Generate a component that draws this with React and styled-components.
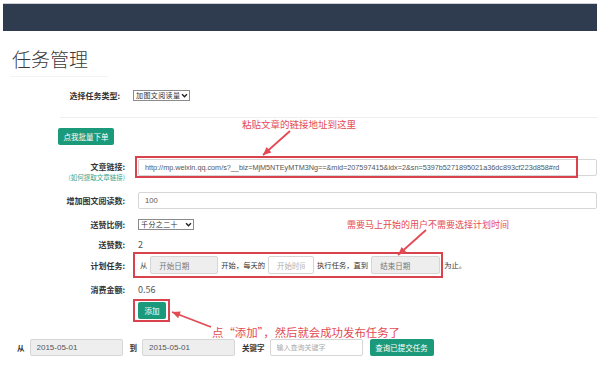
import React from 'react'
import styled, { createGlobalStyle } from 'styled-components'

const GREEN = '#1b9a7b'
const RED = '#e34a53'

const GlobalStyle = createGlobalStyle`
  html, body {
    margin: 0;
    background: #fff;
    font-family: "Noto Sans CJK SC", "Noto Sans", sans-serif;
    color: #333;
  }
`

// 标注箭头：从 tail 指向 tip
const arrowHead = (tail, tip, len = 8, half = 3.6) => {
  const dx = tip[0] - tail[0]
  const dy = tip[1] - tail[1]
  const l = Math.hypot(dx, dy)
  const ux = dx / l
  const uy = dy / l
  const bx = tip[0] - ux * len
  const by = tip[1] - uy * len
  return `${tip[0]},${tip[1]} ${bx - uy * half},${by + ux * half} ${bx + uy * half},${by - ux * half}`
}

const ARROWS = [
  { tail: [290, 131], tip: [263, 155] },
  { tail: [426, 230], tip: [398, 255] },
  { tail: [211, 327], tip: [172, 312] },
]

const App = () => {
  return (
    <Page>
      <GlobalStyle />
      <TopBar />
      <Title>任务管理</Title>
      <TitleRule />

      <Row $label={117} $mt={11} $h={14}>
        <Label>选择任务类型:</Label>
        <SelectBox $w={57}>
          加图文阅读量
          <Chevron />
        </SelectBox>
      </Row>

      <Divider />
      <BatchButton>点我批量下单</BatchButton>

      <LinkRow>
        <StackLabel>
          文章链接:
          <SubLabel>(如何提取文章链接)</SubLabel>
        </StackLabel>
        <InputWrap>
          <LinkField readOnly value="http://mp.weixin.qq.com/s?__biz=MjM5NTEyMTM3Ng==&mid=207597415&idx=2&sn=5397b5271895021a36dc893cf223d858#rd" />
          <LinkFrame />
        </InputWrap>
      </LinkRow>

      <Row $mt={10} $h={17}>
        <Label>增加图文阅读数:</Label>
        <Field readOnly value="100" />
      </Row>

      <Row $mt={9} $h={12}>
        <Label>送赞比例:</Label>
        <SelectBox $w={56}>
          千分之二十
          <Chevron />
        </SelectBox>
      </Row>

      <Row $mt={8} $h={12}>
        <Label>送赞数:</Label>
        <Value>2</Value>
      </Row>

      <Row $mt={2} $h={26}>
        <Label>计划任务:</Label>
        <PlanLine>
          <PlanFrame>
            <PlanText>从</PlanText>
            <SmallField $grey $w={68} readOnly placeholder="开始日期" />
            <PlanText>开始，每天的</PlanText>
            <SmallField $w={46} readOnly placeholder="开始时间" />
            <PlanText>执行任务，直到</PlanText>
            <SmallField $grey $w={69} readOnly placeholder="结束日期" />
          </PlanFrame>
          <PlanText>为止。</PlanText>
        </PlanLine>
      </Row>

      <Row $mt={5} $h={12}>
        <Label>消费金额:</Label>
        <Value>0.56</Value>
      </Row>

      <Row $mt={3} $h={24}>
        <span />
        <AddFrame>
          <AddButton>添加</AddButton>
        </AddFrame>
      </Row>

      <SearchBar>
        <SearchLabel>从</SearchLabel>
        <SearchField $grey readOnly value="2015-05-01" />
        <SearchLabel>到</SearchLabel>
        <SearchField $grey readOnly value="2015-05-01" />
        <SearchLabel>关键字</SearchLabel>
        <SearchField readOnly placeholder="输入查询关键字" />
        <QueryButton>查询已提交任务</QueryButton>
      </SearchBar>

      <PasteNote>粘贴文章的链接地址到这里</PasteNote>
      <ScheduleNote>需要马上开始的用户不需要选择计划时间</ScheduleNote>
      <AddNote>点“添加”，然后就会成功发布任务了</AddNote>

      <ArrowLayer viewBox="0 0 600 377">
        {ARROWS.map((a, i) => (
          <g key={i} fill={RED} stroke={RED}>
            <line x1={a.tail[0]} y1={a.tail[1]} x2={a.tip[0]} y2={a.tip[1]} strokeWidth="1.8" />
            <polygon points={arrowHead(a.tail, a.tip)} stroke="none" />
          </g>
        ))}
      </ArrowLayer>
    </Page>
  )
}

// 布局
const Page = styled.div`
  position: relative;
  width: 600px;
  height: 377px;
  padding: 3px 3px 0;
  box-sizing: border-box;
  overflow: hidden;
`

const TopBar = styled.div`
  height: 27px;
  background: #2f3c50;
  border-top: 1px solid #cdd2d8;
`

const Title = styled.h1`
  margin: 15px 0 0 9px;
  font-size: 19px;
  line-height: 26px;
  font-weight: 300;
  color: #3a3a3a;
`

const TitleRule = styled.div`
  width: 98px;
  height: 1px;
  margin: 4px 0 0 7px;
  background: #f4f4f4;
`

const Row = styled.div`
  display: grid;
  grid-template-columns: ${(p) => p.$label || 122}px 1fr;
  column-gap: 13px;
  align-items: center;
  height: ${(p) => p.$h}px;
  margin-top: ${(p) => p.$mt}px;
`

const LinkRow = styled.div`
  display: grid;
  grid-template-columns: 122px 1fr;
  column-gap: 13px;
  align-items: start;
  margin-top: 14px;
`

const Label = styled.div`
  text-align: right;
  font-size: 8px;
  font-weight: 700;
  color: #333;
  white-space: nowrap;
`

const StackLabel = styled(Label)`
  padding-top: 3px;
  line-height: 10px;
  display: flex;
  flex-direction: column;
  align-items: flex-end;
`

const SubLabel = styled.span`
  font-size: 6.5px;
  font-weight: 400;
  color: #3aa58c;
`

const Value = styled.div`
  font-size: 9px;
  color: #555;
`

const Divider = styled.div`
  height: 1px;
  margin: 15px 0 0 57px;
  background: #eeeeee;
`

const InputWrap = styled.div`
  position: relative;
`

const Field = styled.input`
  display: block;
  box-sizing: border-box;
  width: 100%;
  height: 17px;
  padding: 0 6px;
  border: 1px solid #d6d6d6;
  border-radius: 2px;
  background: ${(p) => (p.$grey ? '#eeeeee' : '#fff')};
  font-family: "Liberation Sans", "Noto Sans CJK SC", sans-serif;
  font-size: 7.6px;
  color: #555;
  outline: none;

  &::placeholder {
    color: #a5a5a5;
  }
`

const LinkField = styled(Field)`
  font-size: 7.25px;
`

const SmallField = styled(Field)`
  width: ${(p) => p.$w}px;
  height: 18px;
  font-family: "Noto Sans CJK SC", sans-serif;
  font-size: 7.5px;
  padding: 0 8px;

  &::placeholder {
    color: ${(p) => (p.$grey ? '#777' : '#b0b0b0')};
  }
`

const LinkFrame = styled.div`
  position: absolute;
  left: -3px;
  top: -3px;
  width: 443px;
  height: 22px;
  box-sizing: border-box;
  border: 2px solid #d9434d;
  pointer-events: none;
`

const SelectBox = styled.div`
  display: inline-flex;
  align-items: center;
  justify-content: space-between;
  box-sizing: border-box;
  width: ${(p) => p.$w}px;
  height: 11px;
  padding: 0 1px 0 2px;
  border: 1px solid #8a8a8a;
  font-size: 7px;
  line-height: 9px;
  color: #333;
  white-space: nowrap;
  letter-spacing: 0.4px;
`

const Chevron = () => (
  <svg width="7" height="7" viewBox="0 0 10 10">
    <path d="M1.5 3.2 L5 6.8 L8.5 3.2" fill="none" stroke="#222" strokeWidth="2" />
  </svg>
)

const PlanLine = styled.div`
  display: flex;
  align-items: center;
  margin-left: -5px;
  gap: 1px;
`

const PlanFrame = styled.div`
  display: flex;
  align-items: center;
  gap: 3px;
  height: 26px;
  box-sizing: border-box;
  padding: 0 1px 0 5px;
  border: 2px solid #d9434d;
`

const PlanText = styled.span`
  font-size: 7.3px;
  color: #333;
  white-space: nowrap;
`

const GreenButton = styled.button`
  display: block;
  height: 17px;
  padding: 0;
  border: none;
  border-radius: 2px;
  background: ${GREEN};
  color: #fff;
  font-family: "Noto Sans CJK SC", sans-serif;
  font-size: 7.5px;
  cursor: pointer;
`

const BatchButton = styled(GreenButton)`
  width: 56px;
  margin: 10px 0 0 55px;
`

const AddFrame = styled.div`
  justify-self: start;
  margin-left: -5px;
  padding: 1px 2px 1px 3px;
  border: 2px solid #d9434d;
`

const AddButton = styled(GreenButton)`
  width: 28px;
`

const SearchBar = styled.div`
  display: flex;
  align-items: center;
  height: 17px;
  margin-top: 17px;
  padding-left: 14px;
`

const SearchLabel = styled.span`
  font-size: 7.5px;
  font-weight: 700;
  color: #333;
  margin-right: 5px;
  margin-left: 7px;

  &:first-child {
    margin-left: 0;
  }
`

const SearchField = styled(Field)`
  width: 93px;
  font-size: 8px;
  font-family: "Liberation Sans", "Noto Sans CJK SC", sans-serif;

  &::placeholder {
    font-family: "Noto Sans CJK SC", sans-serif;
    font-size: 7px;
    color: #aaa;
  }
`

const QueryButton = styled(GreenButton)`
  width: 64px;
  margin-left: 7px;
`

// 标注
const Note = styled.div`
  position: absolute;
  color: ${RED};
  white-space: nowrap;
  line-height: 1;
  pointer-events: none;
`

const PasteNote = styled(Note)`
  left: 242px;
  top: 120px;
  font-size: 9.5px;
`

const ScheduleNote = styled(Note)`
  left: 347px;
  top: 220px;
  font-size: 9px;
`

const AddNote = styled(Note)`
  left: 212px;
  top: 327px;
  font-size: 11.4px;
`

const ArrowLayer = styled.svg`
  position: absolute;
  left: 0;
  top: 0;
  width: 600px;
  height: 377px;
  pointer-events: none;
`

export default App
